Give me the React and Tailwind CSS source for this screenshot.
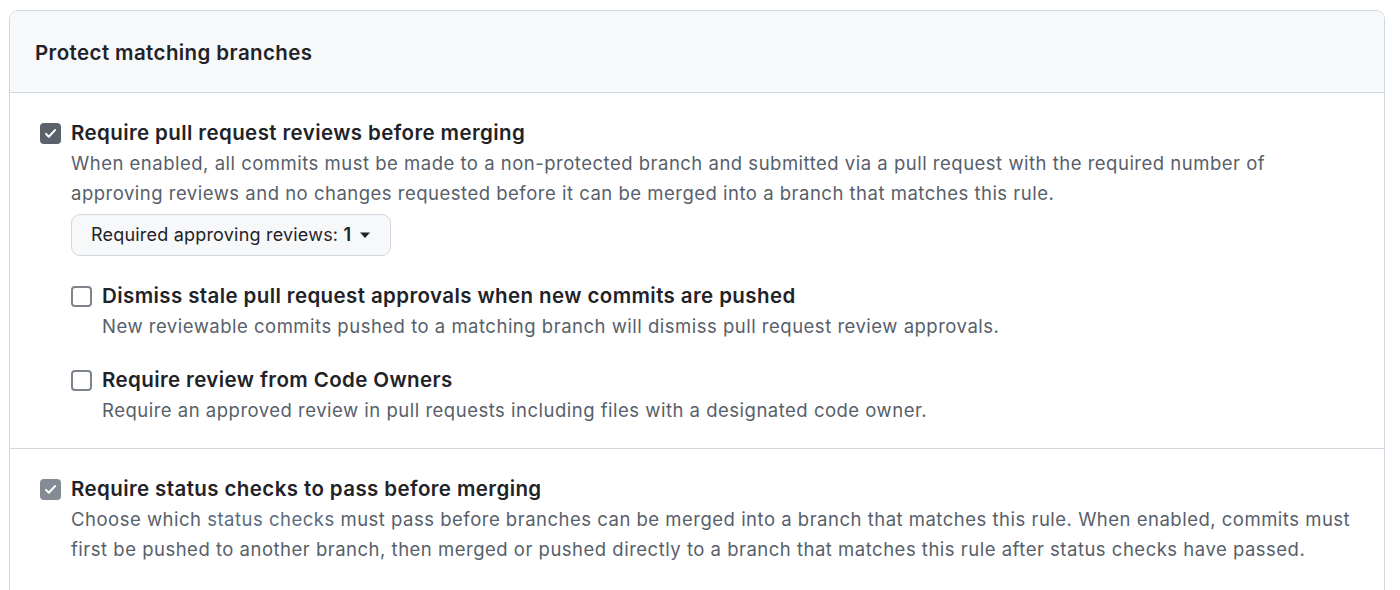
import React from "react";

const Check = ({ checked, muted }) => {
  if (!checked) {
    return (
      <span className="mt-[5px] w-[21px] h-[21px] shrink-0 rounded-[4px] border-2 border-[#7d848d] bg-white" />
    );
  }
  return (
    <span
      className={`mt-[5px] w-[21px] h-[21px] shrink-0 rounded-[4px] flex items-center justify-center ${
        muted ? "bg-[#858b94]" : "bg-[#5c626c]"
      }`}
    >
      <svg viewBox="0 0 16 16" className="w-[15px] h-[15px]" fill="none">
        <path
          d="M3.2 8.4l3 3 6.6-7"
          stroke="white"
          strokeWidth="2.2"
          strokeLinecap="round"
          strokeLinejoin="round"
        />
      </svg>
    </span>
  );
};

const Option = ({ checked, muted, title, children }) => (
  <div className="flex items-start gap-[10px]">
    <Check checked={checked} muted={muted} />
    <div className="flex-1 min-w-0">
      <div className="text-[20.5px] leading-[30px] tracking-[0.4px] font-semibold text-[#1f2328]">
        {title}
      </div>
      <div className="text-[18.5px] leading-[30px] tracking-[0.5px] text-[#57606a]">
        {children}
      </div>
    </div>
  </div>
);

export default function App() {
  return (
    <div
      className="w-[1400px] h-[590px] overflow-hidden bg-white pl-[9px] pr-[15px] pt-[10px]"
      style={{ fontFamily: "Inter, 'Liberation Sans', sans-serif" }}
    >
      <div className="border border-[#d0d7de] rounded-[9px] overflow-hidden h-[600px]">
        {/* Header */}
        <div className="h-[82px] bg-[#f6f8fa] border-b border-[#d0d7de] px-[25px] pt-[3px] flex items-center">
          <h2 className="text-[20.5px] tracking-[0.4px] font-semibold text-[#1f2328]">
            Protect matching branches
          </h2>
        </div>

        {/* Pull request reviews */}
        <div className="pl-[30px] pr-[24px] pt-[25px] pb-[23px] border-b border-[#d0d7de]">
          <Option checked title="Require pull request reviews before merging">
            When enabled, all commits must be made to a non-protected branch and
            submitted via a pull request with the required number of approving
            reviews and no changes requested before it can be merged into a
            branch that matches this rule.
            <div className="mt-[6px] mb-[25px]">
              <button className="h-[42px] pl-[19px] pr-[19px] flex items-center gap-[8px] rounded-[9px] border border-[#d0d7de] bg-[#f6f8fa] text-[18px] tracking-[0.2px] text-[#1f2328]">
                <span>
                  Required approving reviews: <b className="font-semibold">1</b>
                </span>
                <svg viewBox="0 0 12 8" className="w-[12px] h-[8px]">
                  <path d="M1 1.5h10L6 7z" fill="#1f2328" />
                </svg>
              </button>
            </div>
            <div className="flex flex-col gap-[24px]">
              <Option title="Dismiss stale pull request approvals when new commits are pushed">
                New reviewable commits pushed to a matching branch will dismiss
                pull request review approvals.
              </Option>
              <Option title="Require review from Code Owners">
                Require an approved review in pull requests including files with
                a designated code owner.
              </Option>
            </div>
          </Option>
        </div>

        {/* Status checks */}
        <div className="pl-[30px] pr-[24px] pt-[25px]">
          <Option checked muted title="Require status checks to pass before merging">
            Choose which <span className="text-[#5b6b80]">status checks</span>{" "}
            must pass before branches can be merged into a branch that matches
            this rule. When enabled, commits must first be pushed to another
            branch, then merged or pushed directly to a branch that matches this
            rule after status checks have passed.
          </Option>
        </div>
      </div>
    </div>
  );
}
